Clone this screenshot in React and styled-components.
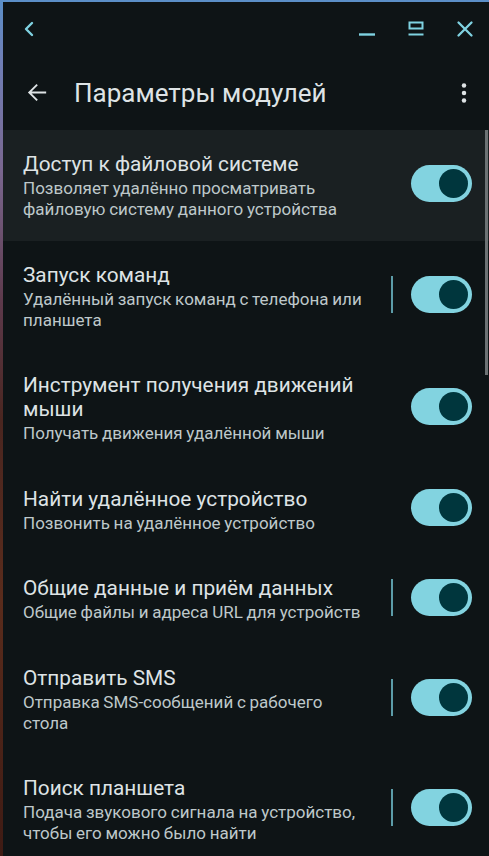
import React from 'react';
import styled, { createGlobalStyle } from 'styled-components';

const GlobalStyle = createGlobalStyle`
  html, body {
    margin: 0;
    padding: 0;
  }
  body {
    font-family: Roboto, 'Noto Sans', sans-serif;
    -webkit-font-smoothing: antialiased;
  }
`;

// desktop peeking out around the window
const Desktop = styled.div`
  width: 489px;
  height: 856px;
  padding: 2px 0 0 3px;
  box-sizing: border-box;
  overflow: hidden;
  background: linear-gradient(
    180deg,
    #5b8fc8 0px,
    #6f7fb6 60px,
    #7a6790 170px,
    #5d3a4c 300px,
    #4a2620 420px,
    #5a2c1c 600px,
    #3e1b14 856px
  );
`;

const Window = styled.div`
  height: 100%;
  background: #0e1416;
  display: flex;
  flex-direction: column;
  overflow: hidden;
`;

const TitleBar = styled.div`
  height: 53px;
  flex-shrink: 0;
  display: flex;
  align-items: center;
`;

const Spacer = styled.div`
  flex: 1;
`;

const CaptionButton = styled.div`
  width: ${props => props.width || 49}px;
  height: 100%;
  display: flex;
  align-items: center;
  justify-content: center;
  color: #7fd2e1;
`;

const AppBar = styled.div`
  height: 75px;
  flex-shrink: 0;
  display: flex;
  align-items: center;
`;

const NavButton = styled.div`
  width: ${props => props.width}px;
  height: 100%;
  display: flex;
  align-items: center;
  justify-content: center;
  color: #dee3e5;
`;

const Title = styled.h1`
  margin: 0 0 0 4px;
  font-size: 26px;
  font-weight: 400;
  color: #dee3e5;
  flex: 1;
`;

const List = styled.div`
  position: relative;
  flex: 1;
`;

const ScrollThumb = styled.div`
  position: absolute;
  top: 0;
  right: 1px;
  width: 3px;
  height: 245px;
  background: #6c7274;
`;

const Row = styled.div`
  display: flex;
  align-items: center;
  padding: 22px 17px 20.5px 20px;
  background: ${props => (props.active ? '#1a2022' : 'transparent')};
`;

const Text = styled.div`
  flex: 1;
  min-width: 0;
  padding-right: 19px;
`;

const ItemTitle = styled.div`
  font-size: 20.8px;
  line-height: 24px;
  color: #dee3e5;
`;

// summary lines break where the app breaks them
const ItemSub = styled.div`
  margin-top: 2px;
  font-size: 17px;
  line-height: 21px;
  word-spacing: -0.5px;
  white-space: pre;
  color: #bec8ca;
`;

const Trailing = styled.div`
  display: flex;
  align-items: center;
  margin-bottom: 5px;
`;

const Divider = styled.div`
  width: 2px;
  height: 37px;
  margin-right: 18px;
  background: #5c9ca8;
`;

const Track = styled.div`
  width: 61px;
  height: 37px;
  border-radius: 19px;
  background: ${props => (props.on ? '#82d3e0' : '#3f484a')};
  display: flex;
  align-items: center;
  justify-content: ${props => (props.on ? 'flex-end' : 'flex-start')};
  padding: 0 4px;
  box-sizing: border-box;
`;

const Thumb = styled.div`
  width: 29px;
  height: 29px;
  border-radius: 50%;
  background: #00363d;
`;

const Toggle = ({ on }) => (
  <Track on={on ? 1 : 0}>
    <Thumb />
  </Track>
);

const modules = [
  {
    title: 'Доступ к файловой системе',
    sub: ['Позволяет удалённо просматривать', 'файловую систему данного устройства'],
    active: true,
  },
  {
    title: 'Запуск команд',
    sub: ['Удалённый запуск команд с телефона или', 'планшета'],
    settings: true,
  },
  {
    title: 'Инструмент получения движений мыши',
    sub: ['Получать движения удалённой мыши'],
  },
  {
    title: 'Найти удалённое устройство',
    sub: ['Позвонить на удалённое устройство'],
  },
  {
    title: 'Общие данные и приём данных',
    sub: ['Общие файлы и адреса URL для устройств'],
    settings: true,
  },
  {
    title: 'Отправить SMS',
    sub: ['Отправка SMS-сообщений с рабочего', 'стола'],
    settings: true,
  },
  {
    title: 'Поиск планшета',
    sub: ['Подача звукового сигнала на устройство,', 'чтобы его можно было найти'],
    settings: true,
  },
];

const App = () => (
  <>
    <GlobalStyle />
    <Desktop>
      <Window>
        <TitleBar>
          <CaptionButton width={51}>
            <svg width="20" height="20" viewBox="0 0 20 20" fill="none" stroke="currentColor" strokeWidth="2.4" strokeLinecap="round" strokeLinejoin="round">
              <path d="M13 4 L7 10 L13 16" />
            </svg>
          </CaptionButton>
          <Spacer />
          <CaptionButton>
            <svg width="20" height="20" viewBox="0 0 20 20" fill="none" stroke="currentColor" strokeWidth="2.4">
              <path d="M2 15.5 H18" />
            </svg>
          </CaptionButton>
          <CaptionButton>
            <svg width="20" height="20" viewBox="0 0 20 20" fill="none" stroke="currentColor" strokeWidth="2">
              <rect x="3.5" y="3.5" width="13" height="6" />
              <path d="M2.5 15.5 H17.5" />
            </svg>
          </CaptionButton>
          <CaptionButton>
            <svg width="20" height="20" viewBox="0 0 20 20" fill="none" stroke="currentColor" strokeWidth="2.3" strokeLinecap="round">
              <path d="M3.5 3.5 L16.5 16.5 M16.5 3.5 L3.5 16.5" />
            </svg>
          </CaptionButton>
        </TitleBar>

        <AppBar>
          <NavButton width={67}>
            <svg width="29" height="29" viewBox="0 0 24 24" fill="currentColor">
              <path d="M20 11.2H7.9l5.2-5.2L12 4.9 4.9 12l7.1 7.1 1.1-1.1-5.2-5.2H20z" />
            </svg>
          </NavButton>
          <Title>Параметры модулей</Title>
          <NavButton width={50}>
            <svg width="30" height="30" viewBox="0 0 24 24" fill="currentColor">
              <circle cx="12" cy="6" r="1.8" />
              <circle cx="12" cy="12" r="1.8" />
              <circle cx="12" cy="18" r="1.8" />
            </svg>
          </NavButton>
        </AppBar>

        <List>
          {modules.map(m => (
            <Row key={m.title} active={m.active ? 1 : 0}>
              <Text>
                <ItemTitle>{m.title}</ItemTitle>
                <ItemSub>{m.sub.join('\n')}</ItemSub>
              </Text>
              <Trailing>
                {m.settings && <Divider />}
                <Toggle on />
              </Trailing>
            </Row>
          ))}
          <ScrollThumb />
        </List>
      </Window>
    </Desktop>
  </>
);

export default App;
